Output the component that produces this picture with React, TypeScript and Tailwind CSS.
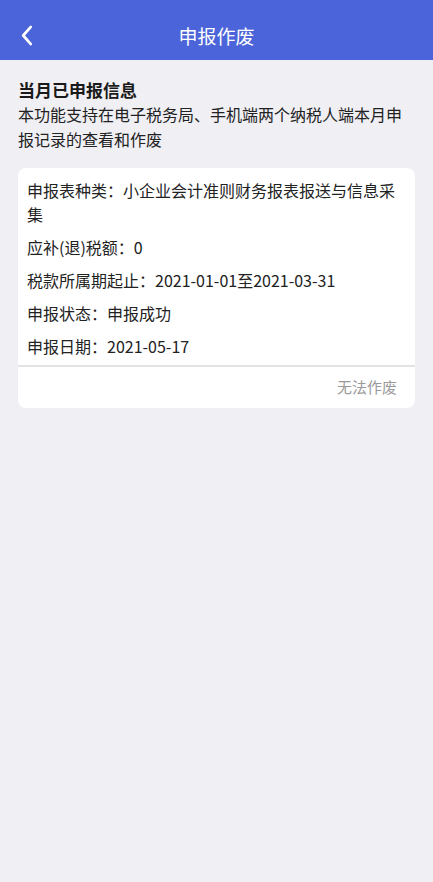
const font = { fontFamily: '"Noto Sans CJK SC", "Noto Sans", sans-serif' };

const rows = [
    "申报表种类：小企业会计准则财务报表报送与信息采集",
    "应补(退)税额：0",
    "税款所属期起止：2021-01-01至2021-03-31",
    "申报状态：申报成功",
    "申报日期：2021-05-17",
];

export default function App() {
    return (
        <div className="min-h-[882px] w-full bg-[#efeff4]" style={font}>
            {/* Header */}
            <div className="relative h-[60px] bg-[#4b64d9] flex items-center justify-center">
                <button className="absolute left-[16px] top-[22px] w-[22px] h-[26px] flex items-center justify-center">
                    <svg viewBox="0 0 14 22" className="w-[14px] h-[21px]" fill="none" stroke="white" strokeWidth={2.8} strokeLinecap="round" strokeLinejoin="round">
                        <path d="M11 2L3 11l8 9" />
                    </svg>
                </button>
                <h1 className="text-[19px] text-white leading-none pt-[10px]">申报作废</h1>
            </div>

            {/* Intro */}
            <div className="px-[18px] pt-[18px]">
                <h2 className="text-[17px] font-bold leading-[24px] text-[#1a1a1a]">当月已申报信息</h2>
                <p className="text-[16px] leading-[25px] text-[#222]">
                    本功能支持在电子税务局、手机端两个纳税人端本月申报记录的查看和作废
                </p>
            </div>

            {/* Card */}
            <div className="mx-[18px] mt-[16px] bg-white rounded-[8px] overflow-hidden">
                <div className="px-[9px] pt-[10px] pb-[7px] flex flex-col gap-[9px]">
                    {rows.map((r) => (
                        <div key={r} className="text-[16px] leading-[24px] text-[#222]">
                            {r}
                        </div>
                    ))}
                </div>
                <div className="border-t-2 border-[#e3e3e6] h-[43px] flex items-center justify-end pr-[18px]">
                    <span className="text-[15px] text-[#9a9a9a]">无法作废</span>
                </div>
            </div>
        </div>
    );
}
